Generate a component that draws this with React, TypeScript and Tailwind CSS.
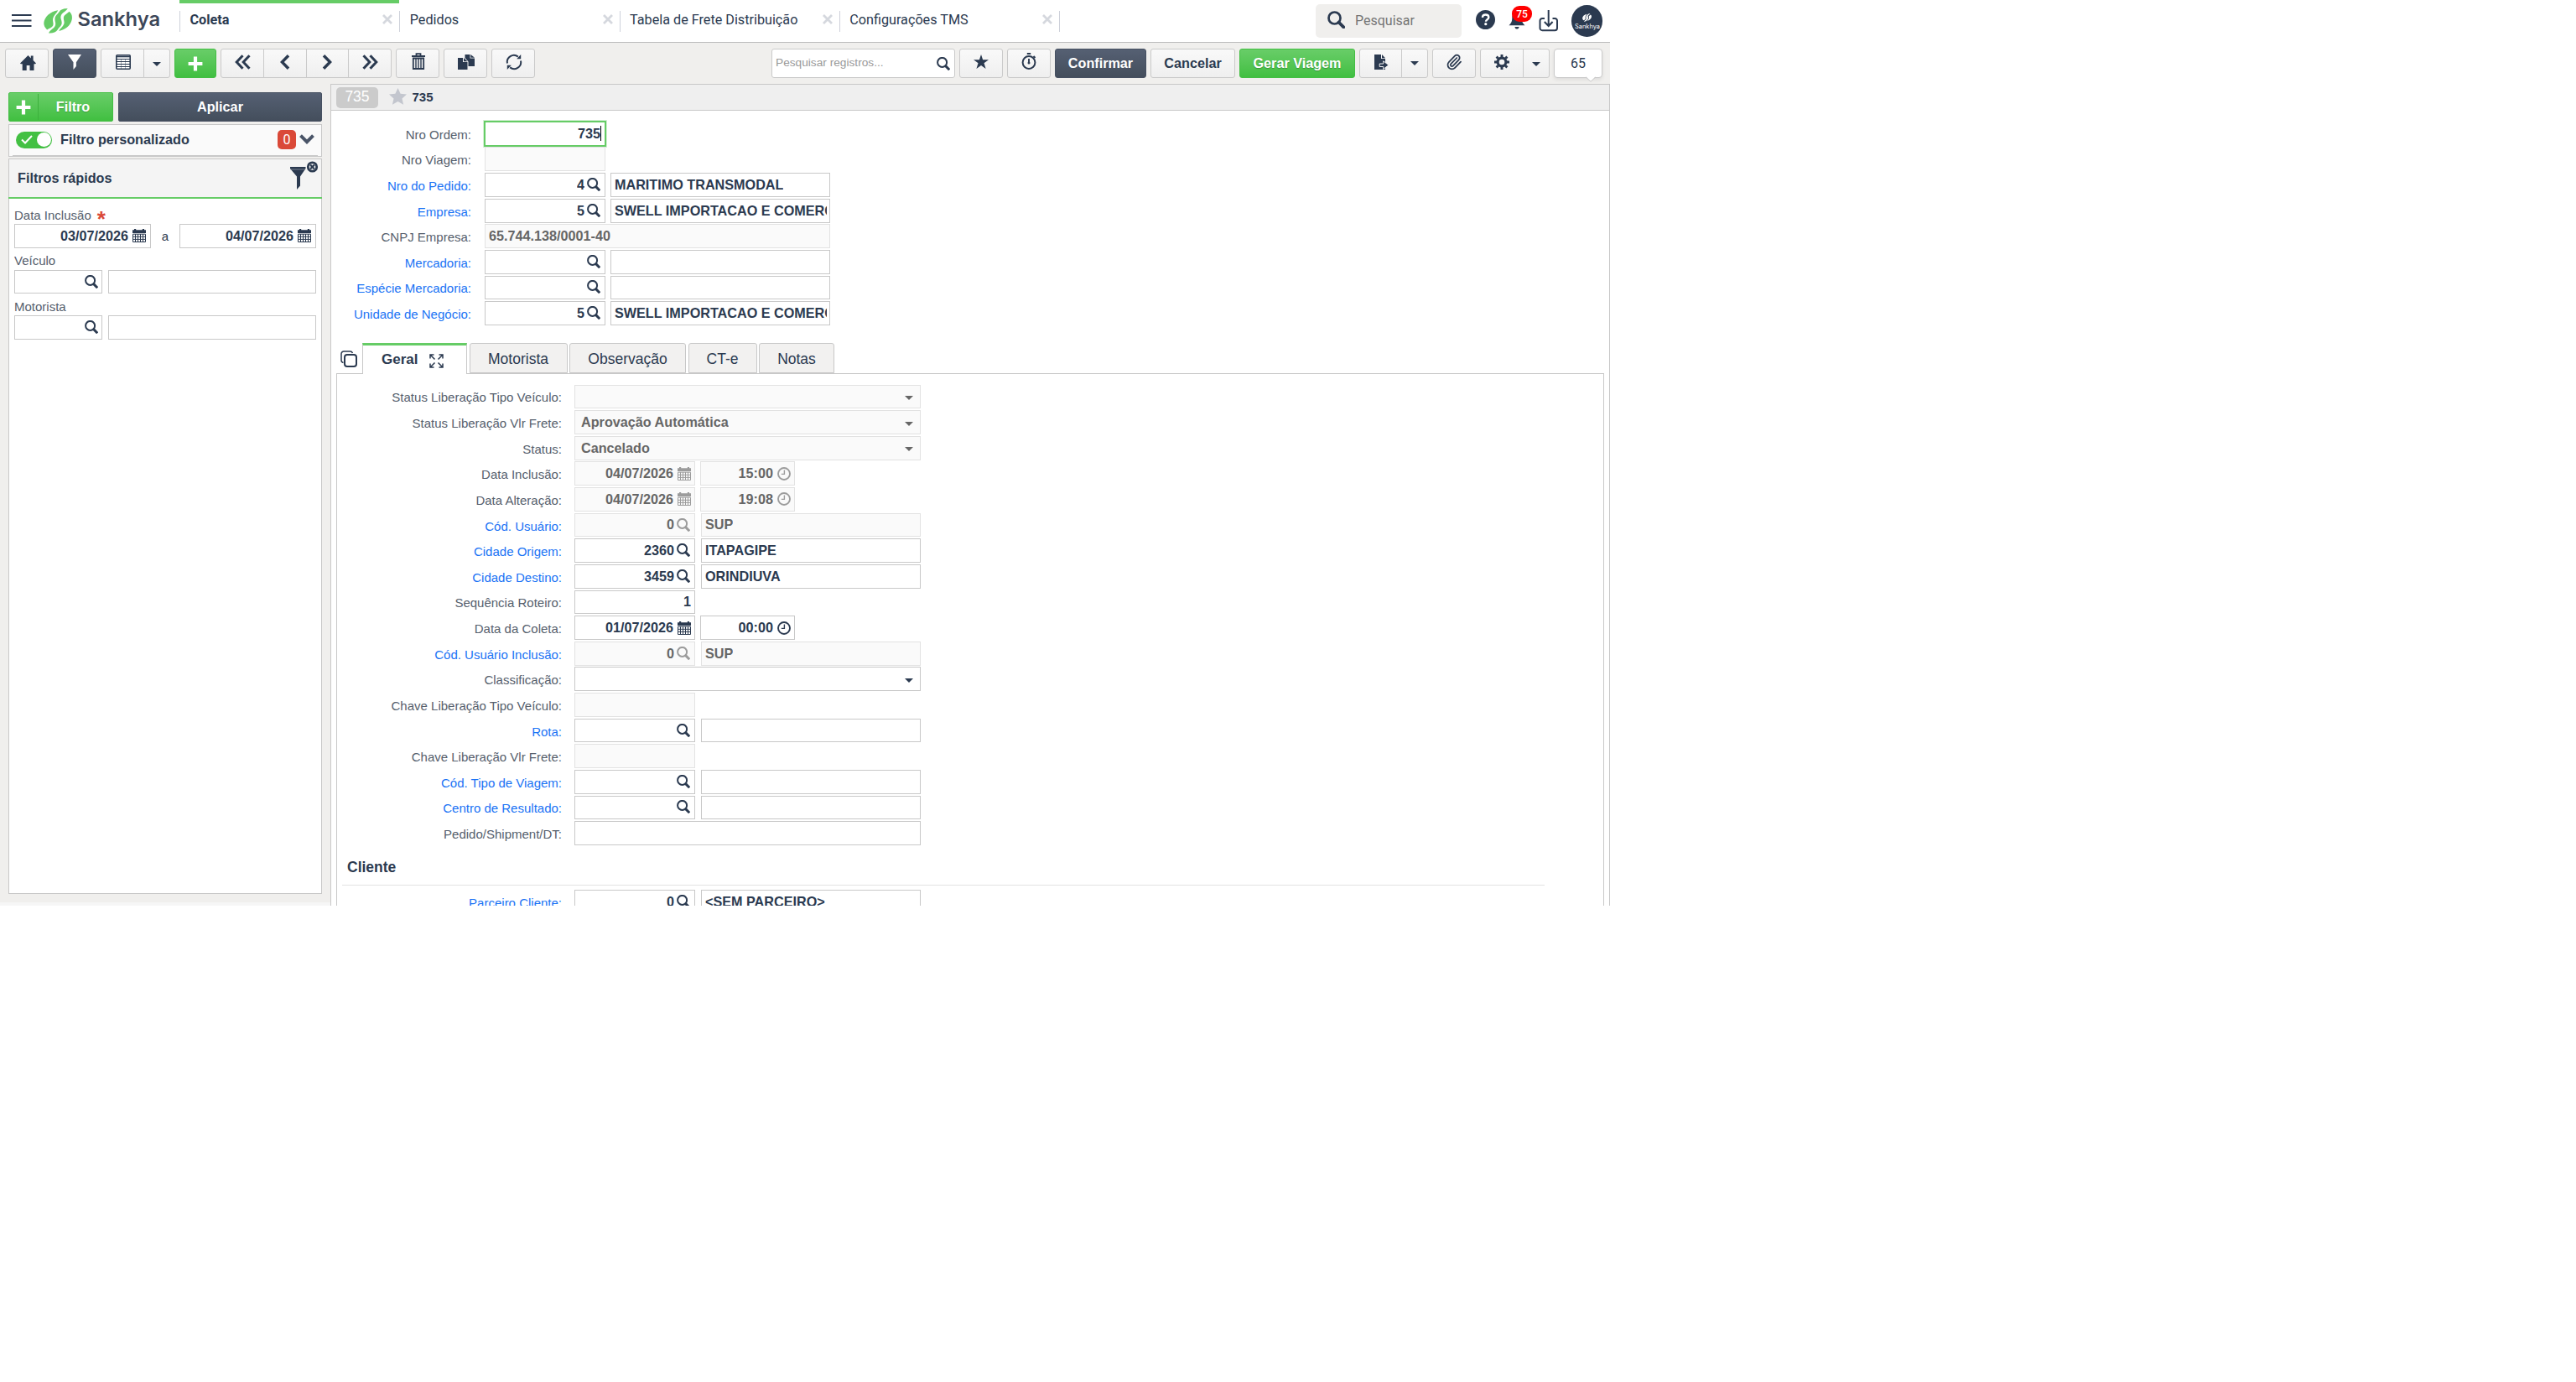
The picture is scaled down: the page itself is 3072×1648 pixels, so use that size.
import { ReactNode } from "react";
import clsx from "clsx";
import { Paperclip } from "lucide-react";

const TABS = [
  { label: "Coleta", active: true },
  { label: "Pedidos" },
  { label: "Tabela de Frete Distribuição" },
  { label: "Configurações TMS" },
];

interface IconProps {
  className?: string;
}

const SearchIcon = ({ className = "w-4 h-4" }: IconProps) => (
  <svg viewBox="0 0 16 16" className={clsx("shrink-0", className)} fill="none" stroke="currentColor">
    <circle cx="6.6" cy="6.4" r="5.5" strokeWidth="2" />
    <path d="M10.4 10.4 15.2 15.2" strokeWidth="3" />
  </svg>
);

const CalendarIcon = () => (
  <svg viewBox="0 0 16 16" className="w-4 h-4 shrink-0" fill="none" stroke="currentColor">
    <path d="M0 1.2h2V0h2.2v1.2h7.6V0H14v1.2h2V5H0z" fill="currentColor" stroke="none" />
    <path d="M.5 6.2h15v9.3H.5zM.5 9.3h15M.5 12.4h15M3.5 6v9.5M6.5 6v9.5M9.5 6v9.5M12.5 6v9.5" strokeWidth="1" />
  </svg>
);

const ClockIcon = () => (
  <svg viewBox="0 0 16 16" className="w-4 h-4 shrink-0" fill="none" stroke="currentColor" strokeWidth="1.9">
    <circle cx="8" cy="8" r="7" />
    <path d="M8.4 3.4v5H4.8" strokeWidth="1.4" />
  </svg>
);

const Caret = ({ className = "" }: IconProps) => (
  <svg viewBox="0 0 10 5" className={clsx("w-2.5 h-[5px] shrink-0", className)} fill="currentColor">
    <path d="M0 0h10L5 5z" />
  </svg>
);

const PlusIcon = () => (
  <svg viewBox="0 0 18 18" className="w-[18px] h-[18px]" fill="currentColor">
    <path d="M6.9.6h4.2v6.3h6.3v4.2h-6.3v6.3H6.9v-6.3H.6V6.9h6.3z" />
  </svg>
);

const LogoMark = ({ className }: IconProps) => (
  <svg viewBox="0 0 34 30" className={className} fill="currentColor">
    <path d="M17.2 2.2C7.5 3.8.8 10.5.3 17.5c-.1 2.8 1.300 5.600 3.800 7.900 2.600-1.400 6.100-2.400 7.100-4.800 1.200-3-1-5.500.2-9.300C12.300 7.900 15.800 5.600 17.200 2.200z" />
    <path d="M28.700 0c-4.200.3-8.200 1-10 3.900-1.900 3-5 4.500-5.200 8.400-.2 3.500 1.600 5.500.2 8.600-1.500 3.200-6.200 4.600-7.700 8.500 4.500.5 8.800-.8 10.700-4 1.500-2.600 5-4.600 5-8.100 0-3.600-2.200-5.400-.8-9C22.300 4.800 27 3.600 28.700 0z" />
    <path d="M30.500 3.800c3.200 2.300 4 6.200 3.100 9.900-1.600 7-8.100 12-15.400 13.200 1.300-3 4.800-4.900 6-8.100 1.200-3.300-1.100-5.600-.1-8.700.8-2.700 4.600-3.900 6.400-6.300z" />
  </svg>
);

const btnLight = "border border-[#cacaca] bg-linear-to-b from-[#f9f9f9] to-[#efefef] text-[#2b3a50]";
const btnDark = "border border-[#465061] bg-linear-to-b from-[#556073] to-[#444e5c] text-white";
const btnGreen = "border border-[#43be43] bg-linear-to-b from-[#68cd68] to-[#40bf40] text-white";

interface ToolButtonProps {
  className: string;
  children: ReactNode;
}

const ToolButton = ({ className, children }: ToolButtonProps) => (
  <button
    className={clsx(
      "h-[35px] shrink-0 flex items-center justify-center font-bold text-[16.2px] leading-none",
      className
    )}
  >
    {children}
  </button>
);

interface FieldProps {
  value?: string;
  width: string;
  icon?: "search" | "calendar" | "clock" | "caret";
  disabled?: boolean;
  right?: boolean;
  className?: string;
}

const Field = ({ value, width, icon, disabled, right, className }: FieldProps) => (
  <div
    className={clsx(
      "h-[28.8px] shrink-0 border flex items-center font-bold text-[16.2px] leading-none whitespace-nowrap",
      width,
      disabled ? "bg-[#fafafa] border-[#e2e2e2] text-[#666]" : "bg-white border-[#c8c8c8] text-[#2b3a50]",
      right && "justify-end",
      className
    )}
  >
    <span className="overflow-hidden pb-[2px] pt-px">{value}</span>
    {icon && (
      <span className={clsx("flex", disabled && icon !== "caret" && "text-[#9c9c9c]")}>
        {icon === "search" && <SearchIcon className="w-4 h-4 ml-[3px] mb-px" />}
        {icon === "calendar" && <CalendarIcon />}
        {icon === "clock" && <ClockIcon />}
        {icon === "caret" && <Caret className="mt-[3px]" />}
      </span>
    )}
  </div>
);

interface LookupProps {
  code?: string;
  text?: string;
  disabled?: boolean;
  gap: string;
}

const Lookup = ({ code, text, disabled, gap }: LookupProps) => (
  <div className={clsx("flex", gap)}>
    <Field value={code} width="w-36" icon="search" disabled={disabled} right className="pr-[5px]" />
    <Field value={text} width="w-[262px]" disabled={disabled} className="pl-[4px] pr-[3px]" />
  </div>
);

const DateTime = ({ date, time, disabled }: { date: string; time: string; disabled?: boolean }) => (
  <div className="flex gap-1.5">
    <Field value={date} width="w-36" icon="calendar" disabled={disabled} right className="gap-[5px] pr-1" />
    <Field value={time} width="w-[113px]" icon="clock" disabled={disabled} right className="gap-[5px] pr-1" />
  </div>
);

interface RowProps {
  label: string;
  link?: boolean;
  labelWidth: string;
  children: ReactNode;
}

const Row = ({ label, link, labelWidth, children }: RowProps) => (
  <div className="h-[30.625px] flex items-start">
    <div
      className={clsx(
        "h-[28.8px] shrink-0 flex items-center justify-end pt-[2px] text-[15px] leading-none whitespace-nowrap",
        link ? "text-[#1a73f5]" : "text-[#56606d]",
        labelWidth
      )}
    >
      {label}:
    </div>
    {children}
  </div>
);

const TOP = "w-[167px] mr-4";
const GERAL = "w-[268px] mr-[15px]";

const Header = () => (
  <header className="h-[51px] border-b border-[#bcbcbc] bg-white flex font-[Roboto,sans-serif]">
    <div className="w-[214px] flex shrink-0 text-[#2b3a50]">
      <svg viewBox="0 0 24 16" className="w-6 h-4 ml-[14px] mt-[17px]" fill="currentColor">
        <path d="M0 0h23.500v2H0zM0 6.500h23.500v2H0zM0 13h23.500v2H0z" />
      </svg>
      <LogoMark className="w-[34px] h-[30px] ml-[14px] mt-[10px] text-[#66cc66]" />
      <svg viewBox="0 0 100 34" className="w-[100px] h-[34px] ml-[6px] mt-[8px]" fill="#3c4759">
        <text x="0.5" y="23" fontFamily="Inter, sans-serif" fontWeight="600" fontSize="22.5" textLength="98.5" lengthAdjust="spacingAndGlyphs">
          Sankhya
        </text>
      </svg>
    </div>
    {TABS.map((tab) => (
      <div
        key={tab.label}
        className={clsx(
          "w-[262.25px] shrink-0 border-t-4 flex items-start",
          tab.active ? "border-[#66cc66]" : "border-transparent"
        )}
      >
        <div className="mt-[9px] h-[25px] w-full border-l border-[#ced1da] pl-[11.5px] pr-[8px] flex items-center justify-between text-[#2b3a50] text-[16.2px] leading-none">
          <span className={clsx("pb-[2px]", tab.active && "font-bold")}>{tab.label}</span>
          <svg viewBox="0 0 12 12" className="w-3 h-3 mb-[5px]" stroke="#d5d8de" strokeWidth="2.8">
            <path d="M1 1l10 10M11 1 1 11" />
          </svg>
        </div>
      </div>
    ))}
    <div className="mt-[13px] h-[25px] border-l border-[#ced1da]" />
    <div className="ml-auto mr-[9px] flex items-start text-[#2b3a50]">
      <div className="mt-[5px] w-[174px] h-10 rounded-[5px] bg-[#f0efed] flex items-center pl-[14px] gap-3 text-[16px] text-[#757575]">
        <svg viewBox="0 0 21 21" className="w-[21px] h-[21px] mb-[3px] text-[#2b3a50]" fill="none" stroke="currentColor">
          <circle cx="8.5" cy="8.5" r="7" strokeWidth="2.7" />
          <path d="M13.5 13.5l5.800 5.800" strokeWidth="3.8" strokeLinecap="round" />
        </svg>
        Pesquisar
      </div>
      <svg viewBox="0 0 24 24" className="w-[23px] h-[23px] mt-[12px] ml-[17px]">
        <circle cx="12" cy="12" r="12" fill="currentColor" />
        <path d="M8.200 9.300c.2-2.300 1.600-3.500 3.900-3.500s3.900 1.300 3.900 3.200c0 2.700-3.500 2.600-3.500 5.300" fill="none" stroke="#fff" strokeWidth="2.5" />
        <circle cx="12.3" cy="17.4" r="1.7" fill="#fff" />
      </svg>
      <div className="relative w-[28px] mt-[13px] ml-[16px]">
        <svg viewBox="0 0 20 22" className="w-5 h-[22px]" fill="currentColor">
          <path d="M10 1.500c3.600 0 5.700 2.500 5.700 6.500 0 4.500 1 6.300 3.800 9.300H.5C3.300 14.300 4.300 12.500 4.300 8c0-4 2.100-6.500 5.700-6.500zM7.400 19h5.200c-.3 1.700-1.200 2.600-2.600 2.600S7.700 20.700 7.400 19z" />
        </svg>
        <span className="absolute -top-[6px] left-[4px] w-6 h-[19px] rounded-[9px] bg-[#ff0000] text-white text-[12px] leading-[20px] text-center font-medium">
          75
        </span>
      </div>
      <svg viewBox="0 0 24 26" className="w-6 h-[26px] mt-[12px] ml-[8px]" fill="none" stroke="currentColor" strokeWidth="2">
        <path d="M7 10H4.200A2.700 2.700 0 0 0 1.500 12.700v8.800a2.700 2.700 0 0 0 2.700 2.700h15.100a2.700 2.700 0 0 0 2.700-2.700v-8.800A2.700 2.700 0 0 0 19.300 10h-2.800M11.700 0v18.500M6.800 14l4.900 5 4.900-5" />
      </svg>
      <div className="mt-[6px] ml-[15px] w-[37px] h-[38px] rounded-full bg-[#2b3a50] flex flex-col items-center">
        <LogoMark className="w-[11px] h-[10px] mt-[10px] text-white" />
        <svg viewBox="0 0 30 10" className="w-[30px] h-[10px] mt-[2px]" fill="#fff">
          <text x="0" y="6.2" fontFamily="Inter, sans-serif" fontSize="7" textLength="30" lengthAdjust="spacingAndGlyphs">
            Sankhya
          </text>
        </svg>
      </div>
    </div>
  </header>
);

const Toolbar = () => (
  <div className="h-[49px] bg-[#f0efed] pl-[6px] pr-[9px] pt-[7px] flex items-start">
    <ToolButton className={clsx(btnLight, "w-[52px] rounded-[3px] mr-[5px]")}>
      <svg viewBox="0 0 19 18" className="w-[19px] h-[18px] mb-[2px] ml-[2px]" fill="currentColor">
        <path d="M9.500 0l3.300 3.400V.6h2.800v5.500L19 9.600l-.8.700h-1.700V18h-5v-6H7.700v6h-5v-7.700H.8L0 9.600z" />
      </svg>
    </ToolButton>
    <ToolButton className={clsx(btnDark, "w-[52px] rounded-[3px] mr-[5px]")}>
      <svg viewBox="0 0 16 18" className="w-4 h-[18px] mb-[4px]" fill="currentColor">
        <path d="M0 0h16L9.900 9.300V14L6.500 18V9.300z" />
      </svg>
    </ToolButton>
    <ToolButton className={clsx(btnLight, "w-[52px] rounded-l-[3px]")}>
      <svg viewBox="0 0 18 18" className="w-[18px] h-[18px] mb-[3px] ml-px" fill="none" stroke="currentColor">
        <rect x=".8" y=".8" width="16.4" height="16.4" rx="1" fill="#fff" strokeWidth="1.6" />
        <path d="M1 2.500h16" strokeWidth="1.6" />
        <path d="M1 5.500h16M1 8.500h16M1 11.500h16M1 14.500h16" strokeWidth="1" />
        <path d="M6.500 5v12M11.500 5v12" strokeWidth=".8" opacity=".5" />
      </svg>
    </ToolButton>
    <ToolButton className={clsx(btnLight, "w-8 rounded-r-[3px] -ml-px mr-[5px]")}>
      <Caret className="mt-[2px]" />
    </ToolButton>
    <ToolButton className={clsx(btnGreen, "w-[50px] rounded-[3px] mr-[5px]")}>
      <PlusIcon />
    </ToolButton>
    <ToolButton className={clsx(btnLight, "w-[52px] rounded-l-[3px]")}>
      <svg viewBox="0 0 19 18" className="w-[19px] h-[18px] mb-[3px]" fill="none" stroke="currentColor" strokeWidth="3">
        <path d="M9.500 1.200 2.200 9l7.300 7.800M17.500 1.200 10.200 9l7.300 7.800" />
      </svg>
    </ToolButton>
    <ToolButton className={clsx(btnLight, "w-[52px] -ml-px")}>
      <svg viewBox="0 0 12 18" className="w-3 h-[18px] mb-[3px]" fill="none" stroke="currentColor" strokeWidth="3.4">
        <path d="M10 1.200 2.400 9l7.600 7.800" />
      </svg>
    </ToolButton>
    <ToolButton className={clsx(btnLight, "w-[51px] -ml-px")}>
      <svg viewBox="0 0 12 18" className="w-3 h-[18px] mb-[3px] mr-px" fill="none" stroke="currentColor" strokeWidth="3.4">
        <path d="M2 1.200 9.600 9 2 16.800" />
      </svg>
    </ToolButton>
    <ToolButton className={clsx(btnLight, "w-[52px] rounded-r-[3px] -ml-px mr-[5px]")}>
      <svg viewBox="0 0 19 18" className="w-[19px] h-[18px] mb-[3px]" fill="none" stroke="currentColor" strokeWidth="3">
        <path d="M1.500 1.200 8.800 9l-7.300 7.800M9.500 1.200 16.800 9l-7.300 7.800" />
      </svg>
    </ToolButton>
    <ToolButton className={clsx(btnLight, "w-[52px] rounded-[3px] mr-[5px]")}>
      <svg viewBox="0 0 16 20" className="w-4 h-5 mb-[5px] ml-px" fill="none" stroke="currentColor">
        <path d="M5.500 3V1.200h5V3M0 4h16" strokeWidth="1.8" />
        <path d="M1.800 6.500h12.400V19H1.800z" strokeWidth="1.8" />
        <path d="M5 6.500V19M8 6.500V19M11 6.500V19" strokeWidth="1.4" />
      </svg>
    </ToolButton>
    <ToolButton className={clsx(btnLight, "w-[52px] rounded-[3px] mr-[5px]")}>
      <svg viewBox="0 0 20 18" className="w-5 h-[18px] mb-[3px] ml-px" fill="currentColor">
        <path d="M8.500 0h6v4.500H20V14h-7.500V8.500L8.500 4z" />
        <path d="M15.300 0 20 3.800h-4.700z" />
        <path d="M0 4h6v5h5.500v9H0z" />
        <path d="M7 4l4.500 4.200H7z" />
      </svg>
    </ToolButton>
    <ToolButton className={clsx(btnLight, "w-[52px] rounded-[3px]")}>
      <svg viewBox="0 0 20 20" className="w-5 h-5 mb-[3px] ml-[2px]" fill="none" stroke="currentColor" strokeWidth="2">
        <path d="M2 11.500A8 8 0 0 1 14.800 3.600M18 8.500A8 8 0 0 1 5.200 16.400" />
        <path d="M13.200 6.200h5V1zM6.800 13.800h-5V19z" fill="currentColor" stroke="none" />
      </svg>
    </ToolButton>

    <div className="ml-auto h-[35px] w-[219px] rounded-[3px] border border-[#cacaca] bg-white flex items-center justify-between pl-1 pr-[5px] mr-[5px] text-[13.7px] text-[#999]">
      <span>Pesquisar registros...</span>
      <SearchIcon className="w-4 h-4 text-[#2b3a50] mt-px" />
    </div>
    <ToolButton className={clsx(btnLight, "w-[52px] rounded-[3px] mr-[5px]")}>
      <svg viewBox="0 0 18 17" className="w-[18px] h-[17px] mb-[4px]" fill="currentColor">
        <path d="M9 0l2.100 6.200H18l-5.500 4L14.600 17 9 12.900 3.400 17l2.100-6.800L0 6.200h6.900z" />
      </svg>
    </ToolButton>
    <ToolButton className={clsx(btnLight, "w-[52px] rounded-[3px] mr-[5px]")}>
      <svg viewBox="0 0 18 20" className="w-[18px] h-5 mb-[5px]" fill="none" stroke="currentColor">
        <circle cx="9" cy="11.5" r="7.4" strokeWidth="2" />
        <path d="M9 7v5.500M6.800 1h4.400M14.500 4l2 2" strokeWidth="1.9" />
        <circle cx="9" cy="12" r="1.5" fill="currentColor" stroke="none" />
      </svg>
    </ToolButton>
    <ToolButton className={clsx(btnDark, "w-[109px] rounded-[3px] mr-[5px]")}>Confirmar</ToolButton>
    <ToolButton className={clsx(btnLight, "w-[101px] rounded-[3px] mr-[5px]")}>Cancelar</ToolButton>
    <ToolButton className={clsx(btnGreen, "w-[138px] rounded-[3px] mr-[5px] text-shadow-[0_1px_1px_rgb(0_0_0/0.25)]")}>
      Gerar Viagem
    </ToolButton>
    <ToolButton className={clsx(btnLight, "w-[51px] rounded-l-[3px]")}>
      <svg viewBox="0 0 17 18" className="w-[17px] h-[18px] mb-[3px] ml-px" fill="currentColor">
        <path d="M0 0h8v5h5v13H0z" />
        <path d="M9 0l4 4.200H9z" />
        <path d="M6.200 11h4.500V7.800L17 12.600l-6.300 4.900v-3H6.200z" stroke="#f4f4f4" strokeWidth="1" />
      </svg>
    </ToolButton>
    <ToolButton className={clsx(btnLight, "w-8 rounded-r-[3px] -ml-px mr-[5px]")}>
      <Caret />
    </ToolButton>
    <ToolButton className={clsx(btnLight, "w-[52px] rounded-[3px] mr-[5px]")}>
      <Paperclip className="w-5 h-5 mb-[3px]" strokeWidth={2.1} />
    </ToolButton>
    <ToolButton className={clsx(btnLight, "w-[52px] rounded-l-[3px]")}>
      <svg viewBox="0 0 18 18" className="w-[18px] h-[18px] mb-[3px]" fill="none" stroke="currentColor">
        <circle cx="9" cy="9" r="4.9" strokeWidth="3.2" />
        <path d="M9 0v3M9 15v3M0 9h3M15 9h3M2.600 2.600l2.200 2.200M13.200 13.200l2.200 2.200M15.400 2.600l-2.200 2.200M4.800 13.200l-2.200 2.200" strokeWidth="2.9" />
      </svg>
    </ToolButton>
    <ToolButton className={clsx(btnLight, "w-8 rounded-r-[3px] -ml-px mr-[5px]")}>
      <Caret className="mt-[2px]" />
    </ToolButton>
    <div className="relative h-[35px] w-[58px] shrink-0 rounded-[4px] border border-[#cacaca] bg-white flex items-center justify-center text-base text-[#2b3a50] shadow-[0_2px_4px_rgb(0_0_0/0.08)] font-[Roboto,sans-serif]">
      65
      <svg viewBox="0 0 12 7" className="absolute left-[37px] -bottom-[6px] w-3 h-[7px]">
        <path d="M0 0h12L6 6z" fill="#fff" />
        <path d="M0 .8l6 5.400 6-5.400" fill="none" stroke="#cacaca" />
      </svg>
    </div>
  </div>
);

const Sidebar = () => (
  <aside className="w-[394px] shrink-0 bg-[#f0efed] pl-[10px] pr-[10px] pt-[10px] border-b-4 border-[#f6f6f6] text-[#2b3a50]">
    <div className="flex gap-[6px] h-[35px]">
      <button className={clsx(btnGreen, "w-[125px] rounded-[2px] flex items-center font-bold text-[16.2px] text-shadow-[0_1px_1px_rgb(0_0_0/0.2)]")}>
        <span className="w-[35px] h-[31px] flex items-center justify-center border-r border-[#3db13d]">
          <PlusIcon />
        </span>
        <span className="flex-1 text-center pr-[6px]">Filtro</span>
      </button>
      <button className={clsx(btnDark, "w-[243px] rounded-[2px] font-bold text-[16.2px]")}>Aplicar</button>
    </div>

    <div className="mt-[3px] h-[39px] border border-[#c8c8c8] bg-[#fafafa] px-1">
      <div className="h-[37px] border-b border-[#c8c8c8] flex items-center pl-[4px] pr-[4px] pb-px">
        <span className="w-[43px] h-5 rounded-full bg-[#43c043] flex items-center justify-between pl-[6px] pr-px">
          <svg viewBox="0 0 14 11" className="w-[14px] h-[11px]" fill="none" stroke="#fff" strokeWidth="2">
            <path d="M1 5.500l4 4L13 1" />
          </svg>
          <span className="w-[17px] h-[17px] rounded-full bg-white" />
        </span>
        <span className="ml-[10px] pb-px font-bold text-[16.2px]">Filtro personalizado</span>
        <span className="ml-auto w-[22px] h-[23px] rounded-[5px] bg-[#da4938] text-white text-base leading-[23px] text-center font-[Roboto,sans-serif]">
          0
        </span>
        <svg viewBox="0 0 18 12" className="w-[18px] h-3 ml-[4px] mb-px" fill="none" stroke="#4a5568" strokeWidth="4">
          <path d="M1.500 1.700 9 9.200l7.500-7.500" />
        </svg>
      </div>
    </div>

    <section className="mt-[2px] h-[877px] border border-[#c8c8c8] bg-white">
      <div className="-mx-px h-[47px] border-x border-[#c8c8c8] bg-[#f4f4f4] flex items-start justify-between pl-[10px] pr-[3px]">
        <h2 className="font-bold text-[16.2px] leading-none mt-[14px]">Filtros rápidos</h2>
        <svg viewBox="0 0 34 38" className="w-[34px] h-[38px]" fill="currentColor">
          <path d="M0 9h18.500v2L12 20.500v11L8 36V20.500L0 11z" />
          <path d="M.5 12h17.500" stroke="#8a93a0" strokeWidth=".8" />
          <circle cx="26.5" cy="9" r="5.2" fill="#f4f4f4" stroke="currentColor" strokeWidth="2.8" />
          <path d="M24 6.500l5 5M29 6.500l-5 5" stroke="currentColor" strokeWidth="2.2" />
        </svg>
      </div>
      <div className="-mx-px -mt-[2px] h-[2px] bg-[#66cc66]" />
      <div className="px-[6px] text-[15px] leading-none">
        <div className="mt-[12px] h-[18px] text-[#56606d] flex">
          Data Inclusão <span className="ml-[7px] text-[26px] font-bold text-[#da4938] leading-[24px] h-0">*</span>
        </div>
        <div className="flex items-center">
          <Field value="03/07/2026" width="w-[163px]" icon="calendar" right className="gap-[5px] pr-[5px]" />
          <span className="flex-1 text-center">a</span>
          <Field value="04/07/2026" width="w-[163px]" icon="calendar" right className="gap-[5px] pr-[5px]" />
        </div>
        <div className="mt-[7.5px] h-[18.4px] text-[#56606d]">Veículo</div>
        <div className="flex gap-[7px]">
          <Field width="w-[105px]" icon="search" right className="pr-1" />
          <Field width="w-[248px]" />
        </div>
        <div className="mt-[7.5px] h-[18.4px] text-[#56606d]">Motorista</div>
        <div className="flex gap-[7px]">
          <Field width="w-[105px]" icon="search" right className="pr-1" />
          <Field width="w-[248px]" />
        </div>
      </div>
    </section>
  </aside>
);

const idleTab =
  "h-9 border border-[#c8c8c8] rounded-t-[3px] bg-[#f2f1f0] flex items-center justify-center pt-[2px] text-[17.5px] text-[#2b3a50]";

const Content = () => (
  <main className="flex-1 min-w-0 border-l border-t border-r border-[#c8c8c8] bg-white flex flex-col">
    <div className="h-[31px] shrink-0 bg-[#efefef] border-b border-[#c8c8c8] flex items-center pl-[6px] text-[#2b3a50]">
      <span className="w-[50px] h-[25px] rounded-[5px] bg-[#cbcbcb] text-white text-[17.5px] leading-[22px] text-center">735</span>
      <svg viewBox="0 0 21 20" className="w-[21px] h-5 ml-[13px] mb-[2px]" fill="#c3c6ce">
        <path d="M10.500 0l3.100 6.700 7.400.8-5.500 5 1.600 7.300-6.600-3.700-6.600 3.700 1.600-7.300L0 7.500l7.400-.8z" />
      </svg>
      <span className="ml-[6.5px] font-bold text-[15px] pt-px">735</span>
    </div>

    <div className="pt-[12.85px]">
      <Row label="Nro Ordem" labelWidth={TOP}>
        <div className="h-[28.8px] w-36 border border-[#66cc66] shadow-[0_0_0_1px_#66cc66,0_0_0_2px_#d5f0d5] flex items-center justify-end pr-1 text-[#2b3a50]">
          <span className="font-bold text-[16.2px] leading-none pb-px">735</span>
          <span className="w-px h-[18px] bg-black" />
        </div>
      </Row>
      <Row label="Nro Viagem" labelWidth={TOP}>
        <Field width="w-36" disabled />
      </Row>
      <Row label="Nro do Pedido" link labelWidth={TOP}>
        <Lookup code="4" text="MARITIMO TRANSMODAL" gap="gap-1.5" />
      </Row>
      <Row label="Empresa" link labelWidth={TOP}>
        <Lookup code="5" text="SWELL IMPORTACAO E COMERCIO" gap="gap-1.5" />
      </Row>
      <Row label="CNPJ Empresa" labelWidth={TOP}>
        <Field value="65.744.138/0001-40" width="w-[412px]" disabled className="pl-1" />
      </Row>
      <Row label="Mercadoria" link labelWidth={TOP}>
        <Lookup gap="gap-1.5" />
      </Row>
      <Row label="Espécie Mercadoria" link labelWidth={TOP}>
        <Lookup gap="gap-1.5" />
      </Row>
      <Row label="Unidade de Negócio" link labelWidth={TOP}>
        <Lookup code="5" text="SWELL IMPORTACAO E COMERCIO" gap="gap-1.5" />
      </Row>
    </div>

    <div className="relative mt-[19.15px] h-[37px] shrink-0 ml-[6px] flex gap-[2.5px]">
      <svg viewBox="0 0 20 20" className="w-5 h-5 ml-[5px] mt-[9px] mr-[3.5px]" fill="none" stroke="#2b3a50">
        <path d="M3.500 14.500C2 14.200 1 13.200 1 11.500V4a3 3 0 0 1 3-3h7.500c1.500 0 2.500.8 3 2" strokeWidth="1.5" />
        <rect x="5" y="5" width="14" height="14" rx="3" strokeWidth="2" />
      </svg>
      <div className="h-[37px] w-[125px] border-x border-[#c8c8c8] border-t-[3px] border-t-[#66cc66] bg-white flex items-center pl-[22px] text-[#2b3a50]">
        <span className="font-bold text-[17px]">Geral</span>
        <svg viewBox="0 0 17 17" className="w-[17px] h-[17px] ml-[14px] mt-[3px]" fill="none" stroke="currentColor" strokeWidth="1.5">
          <path d="M1 5.500V1h4.500M1 1l5.500 5.500M11.500 1H16v4.500M16 1l-5.500 5.500M1 11.500V16h4.500M1 16l5.500-5.500M11.500 16H16v-4.500M16 16l-5.500-5.500" />
        </svg>
      </div>
      <div className={clsx(idleTab, "w-[117px]")}>Motorista</div>
      <div className={clsx(idleTab, "w-[139px]")}>Observação</div>
      <div className={clsx(idleTab, "w-[82px]")}>CT-e</div>
      <div className={clsx(idleTab, "w-[90px]")}>Notas</div>
    </div>

    <div className="-mt-px mx-[6px] flex-1 border-x border-t border-[#c8c8c8] pt-[12.55px]">
      <Row label="Status Liberação Tipo Veículo" labelWidth={GERAL}>
        <Field width="w-[413px]" icon="caret" disabled className="justify-between px-2" />
      </Row>
      <Row label="Status Liberação Vlr Frete" labelWidth={GERAL}>
        <Field value="Aprovação Automática" width="w-[413px]" icon="caret" disabled className="justify-between pl-[7px] pr-2" />
      </Row>
      <Row label="Status" labelWidth={GERAL}>
        <Field value="Cancelado" width="w-[413px]" icon="caret" disabled className="justify-between pl-[7px] pr-2" />
      </Row>
      <Row label="Data Inclusão" labelWidth={GERAL}>
        <DateTime date="04/07/2026" time="15:00" disabled />
      </Row>
      <Row label="Data Alteração" labelWidth={GERAL}>
        <DateTime date="04/07/2026" time="19:08" disabled />
      </Row>
      <Row label="Cód. Usuário" link labelWidth={GERAL}>
        <Lookup code="0" text="SUP" disabled gap="gap-[7px]" />
      </Row>
      <Row label="Cidade Origem" link labelWidth={GERAL}>
        <Lookup code="2360" text="ITAPAGIPE" gap="gap-[7px]" />
      </Row>
      <Row label="Cidade Destino" link labelWidth={GERAL}>
        <Lookup code="3459" text="ORINDIUVA" gap="gap-[7px]" />
      </Row>
      <Row label="Sequência Roteiro" labelWidth={GERAL}>
        <Field value="1" width="w-36" right className="pr-1" />
      </Row>
      <Row label="Data da Coleta" labelWidth={GERAL}>
        <DateTime date="01/07/2026" time="00:00" />
      </Row>
      <Row label="Cód. Usuário Inclusão" link labelWidth={GERAL}>
        <Lookup code="0" text="SUP" disabled gap="gap-[7px]" />
      </Row>
      <Row label="Classificação" labelWidth={GERAL}>
        <Field width="w-[413px]" icon="caret" className="justify-between px-2" />
      </Row>
      <Row label="Chave Liberação Tipo Veículo" labelWidth={GERAL}>
        <Field width="w-36" disabled />
      </Row>
      <Row label="Rota" link labelWidth={GERAL}>
        <Lookup gap="gap-[7px]" />
      </Row>
      <Row label="Chave Liberação Vlr Frete" labelWidth={GERAL}>
        <Field width="w-36" disabled />
      </Row>
      <Row label="Cód. Tipo de Viagem" link labelWidth={GERAL}>
        <Lookup gap="gap-[7px]" />
      </Row>
      <Row label="Centro de Resultado" link labelWidth={GERAL}>
        <Lookup gap="gap-[7px]" />
      </Row>
      <Row label="Pedido/Shipment/DT" labelWidth={GERAL}>
        <Field width="w-[413px]" />
      </Row>

      <div className="ml-[6px] mr-[70px] h-[46px] border-b border-[#e2e2e2] pl-[6px] pt-[14px] mb-[5px] font-bold text-[17.5px] leading-[20px] text-[#2b3a50]">
        Cliente
      </div>
      <Row label="Parceiro Cliente" link labelWidth={GERAL}>
        <Lookup code="0" text="<SEM PARCEIRO>" gap="gap-[7px]" />
      </Row>
    </div>
  </main>
);

export default function App() {
  return (
    <div className="min-h-screen bg-white">
      <div className="w-[1920px] h-[1080px] overflow-hidden flex flex-col font-['Liberation_Sans',Arial,sans-serif]">
        <Header />
        <Toolbar />
        <div className="flex h-[980px] shrink-0">
          <Sidebar />
          <Content />
        </div>
      </div>
    </div>
  );
}
